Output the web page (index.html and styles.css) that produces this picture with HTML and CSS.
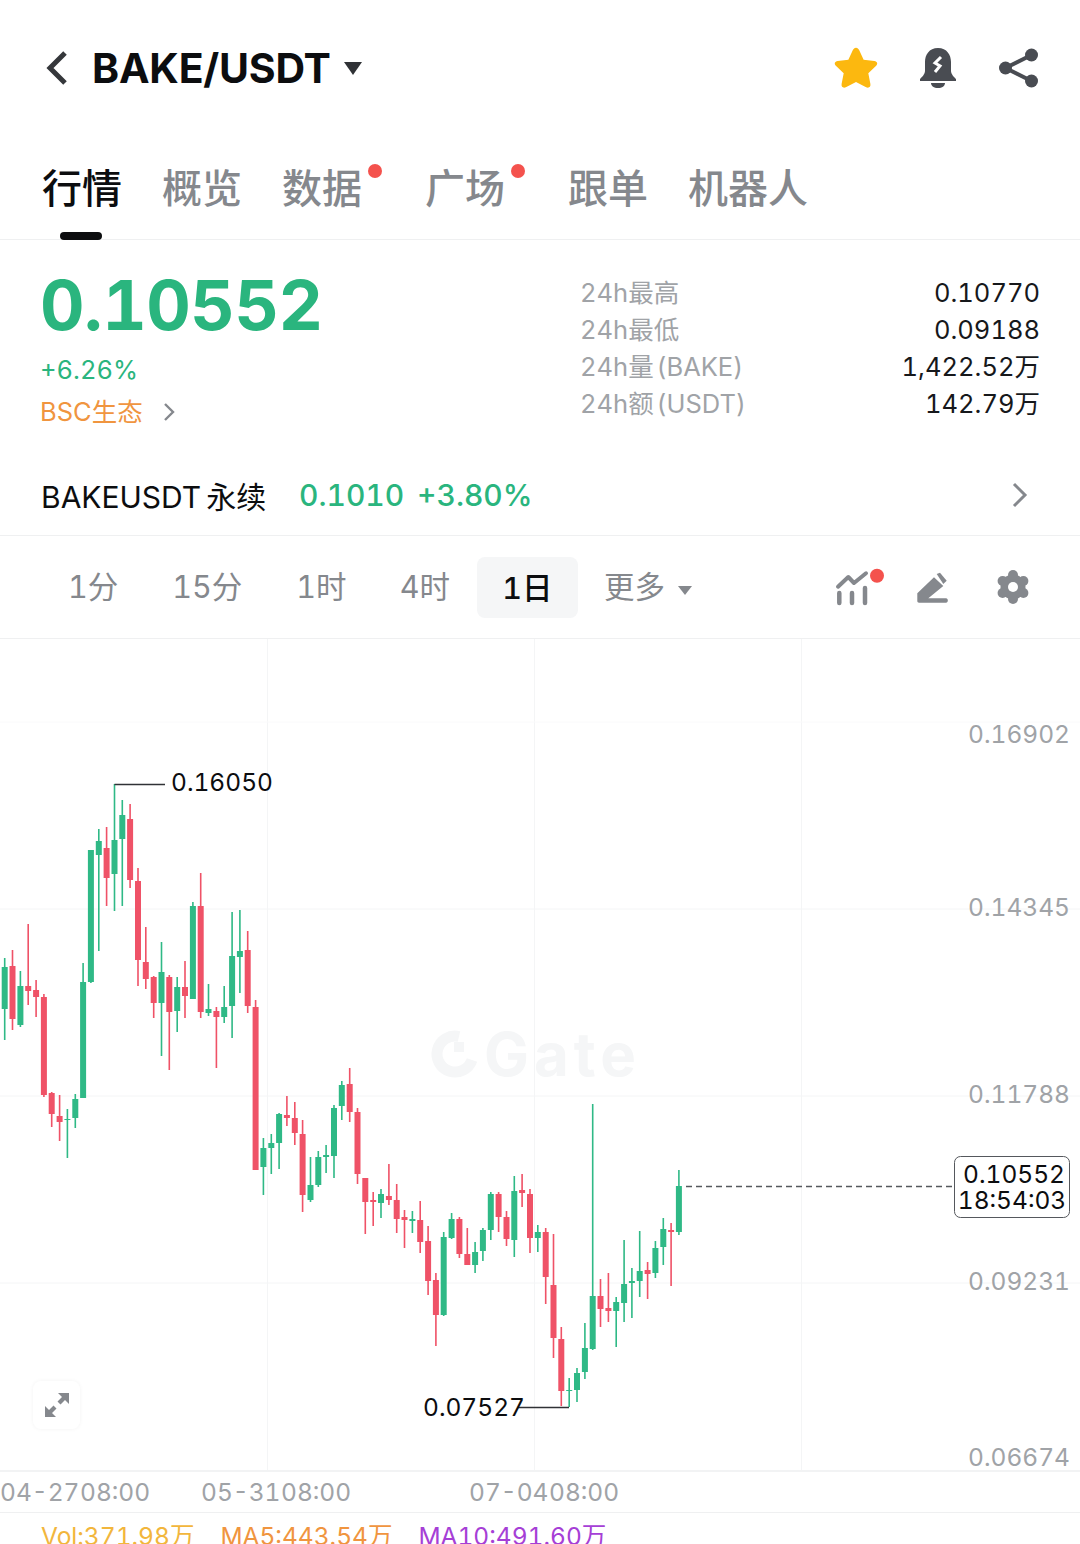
FILE: index.html
```html
<!DOCTYPE html>
<html lang="zh">
<head>
    <meta charset="UTF-8">
    <meta name="viewport" content="width=device-width, initial-scale=1.0">
    <title>BAKE/USDT</title>
    <link rel="stylesheet" href="styles.css">
</head>
<body>
    <div class="page">
        <!-- Cabecera -->
        <header class="topbar">
            <div class="pair">
                <svg class="back" width="24" height="36" viewBox="0 0 24 36"><path d="M21 3 L6 18 L21 33" fill="none" stroke="#35373b" stroke-width="5"/></svg>
                <span class="pair-name">BAKE/USDT</span>
                <span class="caret caret-big"></span>
            </div>
            <div class="top-icons">
                <svg width="48" height="46" viewBox="0 0 46 44"><path d="M23 2.5 C24.5 2.5 25.3 3.4 26 4.8 L30.3 14 L40.6 15.3 C43.4 15.7 44.2 18 42.3 19.9 L34.8 27 L36.8 37.4 C37.3 40.2 35 41.7 32.7 40.4 L23 35.3 L13.3 40.4 C11 41.7 8.7 40.2 9.2 37.4 L11.2 27 L3.7 19.9 C1.8 18 2.6 15.7 5.4 15.3 L15.7 14 L20 4.8 C20.7 3.4 21.5 2.5 23 2.5 Z" fill="#fcb80f"/></svg>
                <svg width="38" height="42" viewBox="0 0 38 42"><path d="M19 1 C10 1 6 8 6 15 V24 C6 27 3 30 1 32 V34 H37 V32 C35 30 32 27 32 24 V15 C32 8 28 1 19 1 Z" fill="#494c52"/><path d="M12 36 H26 C26 39 23 41 19 41 C15 41 12 39 12 36 Z" fill="#494c52"/><path d="M22 10 L16 16 L21 19 L16 25" fill="none" stroke="#fff" stroke-width="3"/></svg>
                <svg class="share" width="40" height="42" viewBox="0 0 40 42"><path d="M32.500 8 L6.500 21 L32.500 34" fill="none" stroke="#494c52" stroke-width="4"/><circle cx="32.500" cy="8" r="6.500" fill="#494c52"/><circle cx="6.500" cy="21" r="6.500" fill="#494c52"/><circle cx="32.500" cy="34" r="6.500" fill="#494c52"/></svg>
            </div>
        </header>

        <!-- Pestañas -->
        <nav class="tabs">
            <span class="tab tab-active">行情</span>
            <span class="tab">概览</span>
            <span class="tab tab-dot">数据</span>
            <span class="tab tab-dot">广场</span>
            <span class="tab">跟单</span>
            <span class="tab">机器人</span>
        </nav>

        <!-- Precio y estadísticas -->
        <section class="summary">
            <div class="summary-left">
                <div class="price">0.10552</div>
                <div class="change">+6.26%</div>
                <div class="sector">BSC生态
                    <svg width="14" height="20" viewBox="0 0 14 20"><path d="M3 2 L11 10 L3 18" fill="none" stroke="#85888d" stroke-width="2.4"/></svg>
                </div>
            </div>
            <dl class="stats">
                <dt>24h最高</dt><dd>0.10770</dd>
                <dt>24h最低</dt><dd>0.09188</dd>
                <dt>24h量 (BAKE)</dt><dd>1,422.52万</dd>
                <dt>24h额 (USDT)</dt><dd>142.79万</dd>
            </dl>
        </section>

        <section class="perp">
            <span class="perp-name">BAKEUSDT 永续</span>
            <span class="perp-num perp-price">0.1010</span>
            <span class="perp-num">+3.80%</span>
            <svg class="perp-arrow" width="18" height="28" viewBox="0 0 18 28"><path d="M3 3 L14 14 L3 25" fill="none" stroke="#85888d" stroke-width="3"/></svg>
        </section>

        <!-- Intervalos -->
        <section class="intervals">
            <span class="iv iv-1">1分</span>
            <span class="iv iv-2">15分</span>
            <span class="iv iv-3">1时</span>
            <span class="iv iv-4">4时</span>
            <span class="iv iv-on">1日</span>
            <span class="iv iv-more">更多<span class="caret caret-small"></span></span>
            <div class="iv-icons">
                <svg width="50" height="40" viewBox="0 0 50 40"><path d="M3 19.700 L13.300 10 L19 16 L31 6.300" fill="none" stroke="#85888d" stroke-width="4" stroke-linecap="round" stroke-linejoin="round"/><path d="M4.300 26 V36 M17 26 V36 M30 21 V36" fill="none" stroke="#85888d" stroke-width="4.500" stroke-linecap="round"/><circle cx="42" cy="8.700" r="7" fill="#f4524d"/></svg>
                <svg width="34" height="34" viewBox="0 0 34 34"><path d="M1.300 23.300 L18 7.300 L27.300 16 L12.300 28.300 H30 C32.500 28.300 32.500 32.700 30 32.700 H3 C2 32.700 1.300 32 1.300 31 Z" fill="#85888d"/><path d="M20.700 4 L24 2.700 L30.700 10.700 L27.300 14 Z" fill="#85888d"/></svg>
                <svg class="gear" width="32" height="34" viewBox="0 0 32 34">
                    <g fill="#85888d">
                        <circle cx="16" cy="17" r="12.500"/>
                        <circle cx="16" cy="5" r="5"/>
                        <circle cx="16" cy="29" r="5"/>
                        <circle cx="5.600" cy="11" r="5"/>
                        <circle cx="26.400" cy="11" r="5"/>
                        <circle cx="5.600" cy="23" r="5"/>
                        <circle cx="26.400" cy="23" r="5"/>
                    </g>
                    <circle cx="16" cy="17" r="5" fill="#fff"/>
                </svg>
            </div>
        </section>

        <!-- Grafico de velas -->
        <section class="chart">
            <svg id="candles" class="chart-svg" width="1080" height="831" viewBox="0 639 1080 831">
                <path class="grid" d="M0 909 H1080 M0 1096 H1080 M0 1283 H1080 M267.500 639 V1470 M534.500 639 V1470 M801.500 639 V1470"/>
                <path class="grid-faint" d="M0 722 H1080"/>
                <g class="mark">
                    <path class="mark-ring" d="M459 1036.500 A18 18 0 1 0 472 1060"/>
                    <rect x="454" y="1042" width="10" height="10"/>
                    <text x="484" y="1076">Gate</text>
                </g>
                <g class="axis-y">
                    <text x="1070" y="743">0.16902</text>
                    <text x="1070" y="916">0.14345</text>
                    <text x="1070" y="1103">0.11788</text>
                    <text x="1070" y="1290">0.09231</text>
                    <text x="1070" y="1466">0.06674</text>
                </g>
                <g id="bars"></g>
                <path class="leader" d="M114.500 784.500 H165 M569 1407.500 H518"/>
                <text class="extreme" x="171" y="791">0.16050</text>
                <text class="extreme" x="423" y="1416">0.07527</text>
                <path class="last-line" d="M686 1186.500 H954"/>
                <rect class="last-box" x="954.500" y="1156.500" width="115" height="61" rx="6"/>
                <text class="last-text"><tspan x="1014" y="1183">0.10552</tspan><tspan x="1012" y="1209">18:54:03</tspan></text>
            </svg>
            <div class="expand">
                <svg width="24" height="24" viewBox="0 0 24 24"><path d="M13 0 H24 V11 L20 7 L15.500 11.500 L12.500 8.500 L17 4 Z M0 13 L4 17 L8.500 12.500 L11.500 15.500 L7 20 L11 24 H0 Z" fill="#85888d"/></svg>
            </div>
        </section>

        <div class="dates">
            <span class="date date-1">04-27 08:00</span>
            <span class="date date-2">05-31 08:00</span>
            <span class="date date-3">07-04 08:00</span>
        </div>

        <div class="ma-row">
            <span class="ma-vol">Vol:371.98万</span>
            <span class="ma-5">MA5:443.54万</span>
            <span class="ma-10">MA10:491.60万</span>
        </div>
    </div>

    <script src="chart.js"></script>
</body>
</html>
```

FILE: styles.css
```css
* {
    margin: 0;
    padding: 0;
    box-sizing: border-box;
    font-family: Inter, 'Noto Sans CJK SC', sans-serif;
    font-variant-numeric: tabular-nums;
}

html, body {
    height: 1544px;
    overflow: hidden;
    background: #fff;
}

.page {
    width: 1080px;
    height: 1544px;
    overflow: hidden;
    display: flex;
    flex-direction: column;
    color: #0c0d0f;
}

.page > * { flex: none; }

/* Cabecera */
.topbar {
    height: 135px;
    padding: 1px 41px 0 44px;
    display: flex;
    justify-content: space-between;
    align-items: center;
}

.pair {
    display: flex;
    align-items: center;
}

.back { margin-right: 24px; }

.pair-name {
    font-size: 41px;
    font-weight: 700;
    letter-spacing: -0.2px;
}

.caret {
    display: inline-block;
    width: 0;
    height: 0;
    border-left-style: solid;
    border-right-style: solid;
    border-top-style: solid;
    border-left-color: transparent;
    border-right-color: transparent;
}

.caret-big {
    margin-left: 13px;
    border-width: 13px 9.500px 0;
    border-top-color: #303236;
}

.caret-small {
    margin-left: 13px;
    border-width: 9px 7.500px 0;
    border-top-color: #85888d;
    vertical-align: 3px;
}

.top-icons {
    display: flex;
    align-items: center;
    gap: 39px;
}

.share { margin-left: 3px; }

/* Pestañas */
.tabs {
    height: 105px;
    padding: 0 0 0 42px;
    display: flex;
    gap: 40px;
    border-bottom: 1px solid #eff0f1;
}

.tab {
    position: relative;
    font-size: 40px;
    line-height: 50px;
    height: 50px;
    margin-top: 29px;
    font-weight: 500;
    color: #85888d;
}

.tab-active { color: #0c0d0f; }

.tab-active::after {
    content: "";
    position: absolute;
    left: 18px;
    top: 68px;
    width: 42px;
    height: 8px;
    border-radius: 4px;
    background: #0c0d0f;
}

.tab-dot { margin-right: 23px; }

.tab-dot::after {
    content: "";
    position: absolute;
    right: -20px;
    top: 0;
    width: 14px;
    height: 14px;
    border-radius: 50%;
    background: #f4524d;
}

/* Precio */
.summary {
    height: 205px;
    padding: 0 40px 0 40px;
    display: flex;
    justify-content: space-between;
}

.price {
    margin-top: 28px;
    font-size: 69px;
    line-height: 74px;
    font-weight: 700;
    color: #2ab57e;
    letter-spacing: -0.5px;
}

.change {
    margin-top: 12px;
    font-size: 25.500px;
    line-height: 32px;
    color: #2ab57e;
}

.sector {
    margin-top: 9px;
    display: flex;
    align-items: center;
    gap: 19px;
    font-size: 25.500px;
    line-height: 34px;
    color: #f0953f;
}

.stats {
    width: 460px;
    margin-top: 34px;
    display: grid;
    grid-template-columns: 1fr auto;
    grid-auto-rows: 37px;
    font-size: 25.500px;
    line-height: 37px;
}

.stats dt { color: #a0a3a7; word-spacing: -4px; }
.stats dd { color: #16181b; text-align: right; }

/* Contrato perpetuo */
.perp {
    height: 91px;
    padding: 9px 51px 0 41px;
    display: flex;
    align-items: center;
    border-bottom: 1px solid #eff0f1;
    font-size: 30px;
}

.perp-name { width: 258px; word-spacing: -3px; }

.perp-num {
    color: #2ab57e;
    font-weight: 500;
}

.perp-price { width: 118px; }

.perp-arrow { margin-left: auto; }

/* Intervalos */
.intervals {
    height: 103px;
    display: flex;
    align-items: center;
    border-bottom: 1px solid #eff0f1;
    padding-left: 68px;
    font-size: 30.500px;
    color: #85888d;
}

.iv { line-height: 40px; }

.iv-1 { margin-right: 54px; }
.iv-2 { margin-right: 54px; }
.iv-3 { margin-right: 53px; }
.iv-4 { margin-right: 27px; }

.iv-on {
    width: 101px;
    height: 61px;
    line-height: 61px;
    text-align: center;
    border-radius: 8px;
    background: #f5f6f7;
    color: #0c0d0f;
    font-weight: 500;
    margin-right: 26px;
}

.iv-icons {
    margin-left: auto;
    padding-right: 51px;
    display: flex;
    align-items: center;
    gap: 31px;
}

.gear { margin-left: 16px; }

/* Grafico */
.chart {
    position: relative;
    height: 831px;
}

.chart-svg { display: block; }

.grid {
    fill: none;
    stroke: #f4f5f6;
    stroke-width: 1;
}

.grid-faint {
    fill: none;
    stroke: #fafafb;
    stroke-width: 1;
}

.mark rect,
.mark text { fill: #f5f6f7; }

.mark text {
    font-size: 60px;
    font-weight: 700;
    letter-spacing: 5px;
}

.mark-ring {
    fill: none;
    stroke: #f5f6f7;
    stroke-width: 11;
}

.axis-y text {
    font-size: 24.500px;
    fill: #a0a3a7;
    text-anchor: end;
}

.leader {
    fill: none;
    stroke: #303236;
    stroke-width: 1.500;
}

.extreme {
    font-size: 24.500px;
    fill: #0c0d0f;
}

.last-line {
    fill: none;
    stroke: #55585d;
    stroke-width: 1.500;
    stroke-dasharray: 6 4;
}

.last-box {
    fill: #fff;
    stroke: #55585d;
    stroke-width: 1;
}

.last-text {
    font-size: 24.500px;
    fill: #0c0d0f;
    text-anchor: middle;
}

.up { fill: #2fb986; }
.down { fill: #ef5267; }

.expand {
    position: absolute;
    left: 33px;
    top: 742px;
    width: 47px;
    height: 48px;
    border-radius: 8px;
    background: #fff;
    box-shadow: 0 0 4px rgba(0, 0, 0, 0.05);
    display: flex;
    align-items: center;
    justify-content: center;
}

/* Fechas */
.dates {
    height: 43px;
    display: flex;
    align-items: center;
    border-top: 2px solid #f2f3f4;
    border-bottom: 1px solid #eff0f1;
    font-size: 24.500px;
    color: #a0a3a7;
}

.date {
    width: 133px;
    white-space: nowrap;
    word-spacing: -6px;
}

.date-1 { margin-right: 68px; }
.date-2 { margin-right: 135px; }

/* Medias moviles */
.ma-row {
    padding: 7px 0 0 41px;
    display: flex;
    gap: 26px;
    font-size: 24.500px;
    line-height: 32px;
    white-space: nowrap;
}

.ma-vol { color: #f2b63c; }
.ma-5 { color: #f0953f; }
.ma-10 { color: #a63fd6; }
```

FILE: chart.js
```js
// [wick arriba, cuerpo arriba, cuerpo abajo, wick abajo, color]
const g = 'up', r = 'down';
const velas = [
    [958, 967, 1009, 1040, g], [950, 966, 1019, 1030, r], [971, 986, 1025, 1027, g], [924, 986, 991, 1005, r],
    [980, 990, 997, 1017, r], [994, 997, 1095, 1097, r], [1092, 1093, 1114, 1127, r], [1095, 1116, 1122, 1141, r],
    [1109, 1119, 1120, 1158, g], [1094, 1099, 1118, 1128, g], [963, 982, 1098, 1098, g], [850, 850, 982, 983, g],
    [829, 841, 855, 951, g], [827, 848, 878, 906, r], [784, 840, 874, 911, g], [800, 815, 839, 906, g],
    [804, 819, 880, 888, r], [868, 881, 960, 986, r], [927, 962, 979, 989, r], [976, 977, 1003, 1018, r],
    [942, 972, 1003, 1056, g], [975, 977, 1012, 1070, r], [977, 987, 1011, 1032, g], [961, 987, 996, 1018, r],
    [902, 906, 999, 999, g], [873, 906, 1012, 1018, r], [984, 1009, 1013, 1016, g], [1007, 1011, 1017, 1068, r],
    [986, 1007, 1017, 1023, g], [912, 956, 1006, 1038, g], [910, 951, 957, 993, g], [931, 950, 1006, 1013, r],
    [1000, 1007, 1170, 1170, r], [1138, 1148, 1167, 1195, g], [1134, 1143, 1148, 1174, g], [1113, 1114, 1143, 1169, g],
    [1096, 1115, 1118, 1126, r], [1102, 1118, 1133, 1145, r], [1120, 1134, 1195, 1212, r], [1157, 1185, 1200, 1202, g],
    [1151, 1157, 1185, 1187, g], [1145, 1155, 1157, 1173, g], [1105, 1108, 1156, 1178, g], [1081, 1085, 1106, 1120, g],
    [1068, 1084, 1112, 1122, r], [1108, 1112, 1174, 1184, r], [1178, 1178, 1202, 1234, r], [1192, 1200, 1202, 1226, r],
    [1189, 1194, 1203, 1218, g], [1164, 1196, 1200, 1205, r], [1184, 1200, 1219, 1233, r], [1210, 1217, 1220, 1248, r],
    [1211, 1219, 1221, 1233, g], [1201, 1220, 1242, 1253, r], [1226, 1241, 1281, 1295, r], [1273, 1280, 1315, 1346, r],
    [1232, 1237, 1315, 1316, g], [1213, 1219, 1238, 1239, g], [1217, 1219, 1254, 1258, r], [1228, 1254, 1265, 1265, r],
    [1242, 1252, 1265, 1273, g], [1228, 1230, 1251, 1261, g], [1192, 1194, 1230, 1240, g], [1192, 1194, 1217, 1232, r],
    [1211, 1217, 1239, 1246, r], [1176, 1191, 1240, 1257, g], [1174, 1190, 1193, 1207, r], [1189, 1194, 1238, 1253, r],
    [1225, 1232, 1238, 1252, g], [1228, 1232, 1277, 1304, r], [1234, 1285, 1338, 1358, r], [1327, 1339, 1391, 1406, r],
    [1378, 1390, 1391, 1407, g], [1368, 1373, 1390, 1402, g], [1323, 1348, 1372, 1379, g], [1104, 1296, 1349, 1350, g],
    [1279, 1296, 1309, 1327, r], [1273, 1308, 1311, 1322, r], [1297, 1302, 1311, 1347, g], [1240, 1284, 1303, 1322, g],
    [1268, 1281, 1283, 1318, g], [1231, 1271, 1281, 1297, g], [1262, 1270, 1274, 1299, r], [1241, 1248, 1273, 1278, g],
    [1218, 1229, 1247, 1265, g], [1223, 1230, 1232, 1286, r], [1170, 1186, 1232, 1235, g]
];

const paso = 7.84;
const inicio = 4.7;
const caminos = { up: '', down: '' };

velas.forEach((v, i) => {
    const x = inicio + paso * i;
    caminos[v[4]] += `M${(x - 0.8).toFixed(1)} ${v[0]}h1.6V${v[3]}h-1.6Z`;
    caminos[v[4]] += `M${(x - 3).toFixed(1)} ${v[1]}h6V${v[2]}h-6Z`;
});

document.getElementById('bars').innerHTML =
    `<path class="up" d="${caminos.up}"/><path class="down" d="${caminos.down}"/>`;
```
